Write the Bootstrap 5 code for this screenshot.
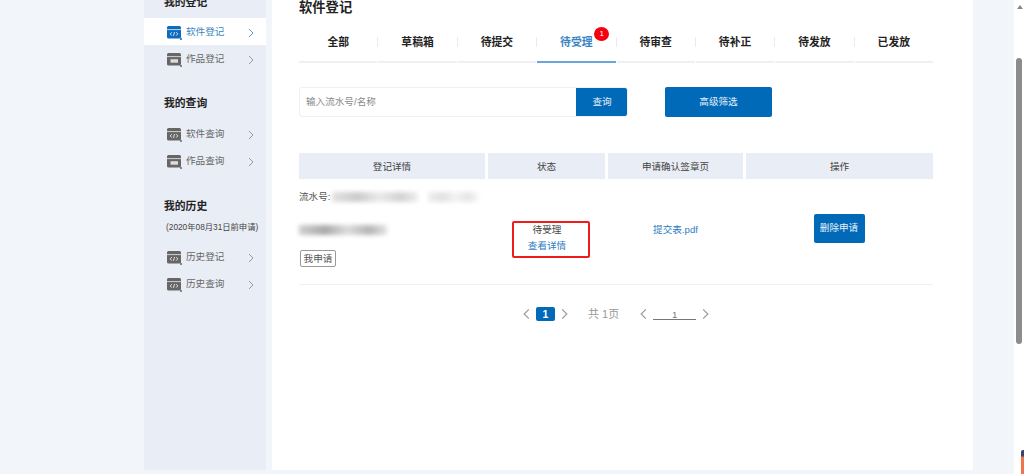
<!DOCTYPE html>
<html lang="zh">
<head>
<meta charset="utf-8">
<title>软件登记</title>
<link href="https://cdn.jsdelivr.net/npm/bootstrap@5.3.0/dist/css/bootstrap.min.css" rel="stylesheet">
<style>
html,body{height:474px;overflow:hidden;background:#f2f6fa;}
body{font-family:"Liberation Sans","Noto Sans CJK SC",sans-serif;font-size:9.6px;color:#444;}
.stage{height:474px;padding-left:144px;padding-right:10px;}
.side-col{width:122px;height:470px;background:#e9edf5;overflow:hidden;flex:none;}
.main-col{width:701px;height:470px;margin-left:6px;background:#fff;padding:0 40px 0 27px;flex:none;overflow:hidden;}
.side-head{font-size:10.8px;font-weight:700;color:#222;padding-left:20px;height:20px;line-height:20px;}
.side-first{margin-top:-8px;}
.side-next{margin-top:21px;}
.side-next.side-last{margin-top:22px;}
.side-note{font-size:8.3px;color:#444;padding-left:22px;height:15px;line-height:15px;margin-top:4px;white-space:nowrap;}
.side-link{height:27px;padding:2px 12px 0 23px;color:#666;font-size:9.6px;gap:4px;}
.side-link.on{background:#fff;color:#3a84c4;}
.side-list{margin-top:7px;}
.side-first + .side-list{margin-top:6px;}
.side-note + .side-list{margin-top:8px;}
.chev{flex:none;margin-left:auto;}
.page-title{font-size:13.3px;font-weight:700;color:#222;height:15px;line-height:15px;}
.tab-row{height:31px;margin-top:17px;margin-bottom:0;width:634px;}
.tab-cell{flex:1 1 0;position:relative;height:31px;border-bottom:2px solid #edf1f5;margin-right:1px;text-align:center;font-size:10.8px;font-weight:700;color:#222;line-height:20px;}
.tab-cell:last-child{margin-right:0;}
.tab-cell.on{color:#3a84c4;border-bottom-color:#6ba5dc;}
.tab-cell:not(:last-child)::after{content:"";position:absolute;right:-1px;top:5px;height:10px;width:1px;background:#e8ecf0;}
.tab-dot{position:absolute;left:57px;top:-5px;width:15px;height:14px;border-radius:50%;background:#f5000f;color:#fff;font-size:8px;line-height:14px;font-weight:400;}
.search-row{margin-top:24px;height:30px;width:473px;}
.search-box{width:329px;height:30px;border:1px solid #eef0f3;border-radius:3px;overflow:hidden;flex:none;}
.search-text{flex:1;padding-left:6px;color:#8a8a8a;font-size:9.6px;line-height:28px;}
.blue-btn{background:#016ab8;color:#e6f0f8;border:0;border-radius:2px;font-size:9.6px;padding:0;}
.search-go{width:52px;height:30px;border-radius:0 2px 2px 0;margin:-1px -1px -1px 0;}
.filter-go{width:107px;height:30px;margin-left:37px;flex:none;}
.grid-head{margin-top:36px;height:26px;gap:3px;width:634px;}
.cell-a{width:186px;flex:none;}
.cell-b{width:117px;flex:none;}
.cell-c{width:135px;flex:none;}
.cell-d{width:187px;flex:none;margin-left:0;}
.grid-head>div{background:#e9edf5;text-align:center;line-height:27px;color:#444;}
.data-row{width:634px;height:106px;border-bottom:1px solid #edf0f3;gap:3px;}
.detail-cell{padding-top:11px;color:#555;}
.flow-line{height:14px;line-height:14px;gap:2px;white-space:nowrap;}
.flow-line span{flex:none;}
.smear{height:10px;background:linear-gradient(90deg,#cfcfcf,#a9a9a9 30%,#dcdcdc 55%,#b5b5b5 80%,#e4e4e4);filter:blur(2px);flex:none;}
.smear-a{width:86px;opacity:.6;}
.smear-b{width:50px;margin-left:8px;opacity:.35;}
.smear-c{width:88px;height:10px;margin-top:21px;}
.tag-mine{display:block;margin-top:15px;margin-left:1px;border:1px solid #999;border-radius:2px;height:17px;line-height:15px;width:36px;text-align:center;font-size:9.6px;color:#555;white-space:nowrap;}
.state-cell{padding-top:42px;}
.state-box{width:78px;height:37px;margin-left:24px;border:2px solid #f01c1c;border-radius:2px;text-align:center;line-height:16px;padding:0 8px 4px 0;color:#444;white-space:nowrap;}
.state-box a,.file-link{color:#2f7cc4;text-decoration:none;}
.file-cell{padding-top:44px;text-align:center;line-height:14px;}
.del-cell{padding-top:35px;text-align:center;}
.del-go{width:51px;height:29px;margin-left:-1px;}
.pager{margin-top:21px;width:634px;height:16px;color:#999;gap:0;padding-left:224px;}
.pager svg{flex:none;}
.pg-now{width:19px;height:14px;background:#016ab8;color:#fff;border-radius:2px;text-align:center;line-height:14px;font-size:10.5px;font-weight:700;margin:0 6px;}
.pg-total{margin:0 21px 0 20px;font-size:11px;white-space:nowrap;}
.pg-input{width:43px;height:11px;border-bottom:1px solid #777;text-align:center;line-height:11px;margin:0 6px 0 6px;color:#777;}
.scroll-rail{position:fixed;top:0;right:0;width:10px;height:474px;background:#fff;}
.scroll-up{position:absolute;left:3px;top:5px;width:0;height:0;border-left:3px solid transparent;border-right:3px solid transparent;border-bottom:4px solid #888;}
.scroll-thumb{position:absolute;left:2px;top:58px;width:6px;height:286px;border-radius:3px;background:#8c8c8c;}
.corner-tip{position:absolute;right:0;bottom:0;width:3px;height:24px;background:linear-gradient(#3c4470 25%,#f2754a 30%);border-radius:2px 0 0 0;}
</style>
</head>
<body>
<svg width="0" height="0" class="position-absolute">
  <symbol id="ic-win" viewBox="0 0 15 14">
    <path d="M1.500 0h11A1.500 1.500 0 0 1 14 1.500V11a1.500 1.500 0 0 1-1.500 1.500h-11A1.500 1.500 0 0 1 0 11V1.500A1.500 1.500 0 0 1 1.500 0z" fill="currentColor"/>
    <path d="M0 3.600h14" stroke="#fff" stroke-width=".7"/>
    <path d="M4.800 6.200 3.200 7.900l1.600 1.700M9.200 6.200l1.600 1.700-1.600 1.700M7.500 6l-1 3.800" stroke="#fff" stroke-width=".8" fill="none"/>
    <circle cx="14" cy="13" r="1" fill="currentColor"/>
  </symbol>
  <symbol id="ic-art" viewBox="0 0 15 14">
    <path d="M1.500 0h11A1.500 1.500 0 0 1 14 1.500V11a1.500 1.500 0 0 1-1.500 1.500h-11A1.500 1.500 0 0 1 0 11V1.500A1.500 1.500 0 0 1 1.500 0z" fill="currentColor"/>
    <path d="M0 3.600h14" stroke="#fff" stroke-width=".7"/>
    <rect x="3.500" y="6.200" width="7.500" height="3.500" fill="#ddd"/>
    <circle cx="14" cy="13" r="1" fill="currentColor"/>
  </symbol>
  <symbol id="ic-next" viewBox="0 0 6 10"><path d="M1 1l4 4-4 4" fill="none" stroke="currentColor" stroke-width="1"/></symbol>
  <symbol id="ic-prev" viewBox="0 0 6 10"><path d="M5 1 1 5l4 4" fill="none" stroke="currentColor" stroke-width="1"/></symbol>
</svg>
<div class="stage d-flex">
  <aside class="side-col">
    <div class="side-head side-first">我的登记</div>
    <div class="side-list">
      <div class="side-link on d-flex align-items-center"><svg width="15" height="14" style="color:#0f6cbd"><use href="#ic-win"/></svg><span>软件登记</span><svg class="chev" width="6" height="10" style="color:#5a9ad6"><use href="#ic-next"/></svg></div>
      <div class="side-link d-flex align-items-center"><svg width="15" height="14" style="color:#666"><use href="#ic-art"/></svg><span>作品登记</span><svg class="chev" width="6" height="10" style="color:#999"><use href="#ic-next"/></svg></div>
    </div>
    <div class="side-head side-next">我的查询</div>
    <div class="side-list">
      <div class="side-link d-flex align-items-center"><svg width="15" height="14" style="color:#666"><use href="#ic-win"/></svg><span>软件查询</span><svg class="chev" width="6" height="10" style="color:#999"><use href="#ic-next"/></svg></div>
      <div class="side-link d-flex align-items-center"><svg width="15" height="14" style="color:#666"><use href="#ic-art"/></svg><span>作品查询</span><svg class="chev" width="6" height="10" style="color:#999"><use href="#ic-next"/></svg></div>
    </div>
    <div class="side-head side-next side-last">我的历史</div>
    <div class="side-note">(2020年08月31日前申请)</div>
    <div class="side-list">
      <div class="side-link d-flex align-items-center"><svg width="15" height="14" style="color:#666"><use href="#ic-win"/></svg><span>历史登记</span><svg class="chev" width="6" height="10" style="color:#999"><use href="#ic-next"/></svg></div>
      <div class="side-link d-flex align-items-center"><svg width="15" height="14" style="color:#666"><use href="#ic-win"/></svg><span>历史查询</span><svg class="chev" width="6" height="10" style="color:#999"><use href="#ic-next"/></svg></div>
    </div>
  </aside>
  <main class="main-col">
    <div class="page-title">软件登记</div>
    <div class="tab-row d-flex">
      <div class="tab-cell">全部</div>
      <div class="tab-cell">草稿箱</div>
      <div class="tab-cell">待提交</div>
      <div class="tab-cell on">待受理<span class="tab-dot">1</span></div>
      <div class="tab-cell">待审查</div>
      <div class="tab-cell">待补正</div>
      <div class="tab-cell">待发放</div>
      <div class="tab-cell">已发放</div>
    </div>
    <div class="search-row d-flex">
      <div class="search-box d-flex">
        <div class="search-text">输入流水号/名称</div>
        <button type="button" class="blue-btn search-go">查询</button>
      </div>
      <button type="button" class="blue-btn filter-go">高级筛选</button>
    </div>
    <div class="grid-head d-flex">
      <div class="cell-a">登记详情</div>
      <div class="cell-b">状态</div>
      <div class="cell-c">申请确认签章页</div>
      <div class="cell-d">操作</div>
    </div>
    <div class="data-row d-flex">
      <div class="cell-a detail-cell">
        <div class="flow-line d-flex align-items-center"><span>流水号:</span><div class="smear smear-a"></div><div class="smear smear-b"></div></div>
        <div class="smear smear-c"></div>
        <span class="tag-mine">我申请</span>
      </div>
      <div class="cell-b state-cell">
        <div class="state-box d-flex flex-column justify-content-center"><span>待受理</span><a href="#">查看详情</a></div>
      </div>
      <div class="cell-c file-cell"><a class="file-link" href="#">提交表.pdf</a></div>
      <div class="cell-d del-cell"><button type="button" class="blue-btn del-go">删除申请</button></div>
    </div>
    <div class="pager d-flex align-items-center">
      <svg width="7" height="12"><use href="#ic-prev"/></svg>
      <div class="pg-now">1</div>
      <svg width="7" height="12"><use href="#ic-next"/></svg>
      <div class="pg-total">共 1页</div>
      <svg width="7" height="12"><use href="#ic-prev"/></svg>
      <div class="pg-input">1</div>
      <svg width="7" height="12"><use href="#ic-next"/></svg>
    </div>
  </main>
</div>
<div class="scroll-rail"><div class="scroll-up"></div><div class="scroll-thumb"></div><div class="corner-tip"></div></div>
</body>
</html>
